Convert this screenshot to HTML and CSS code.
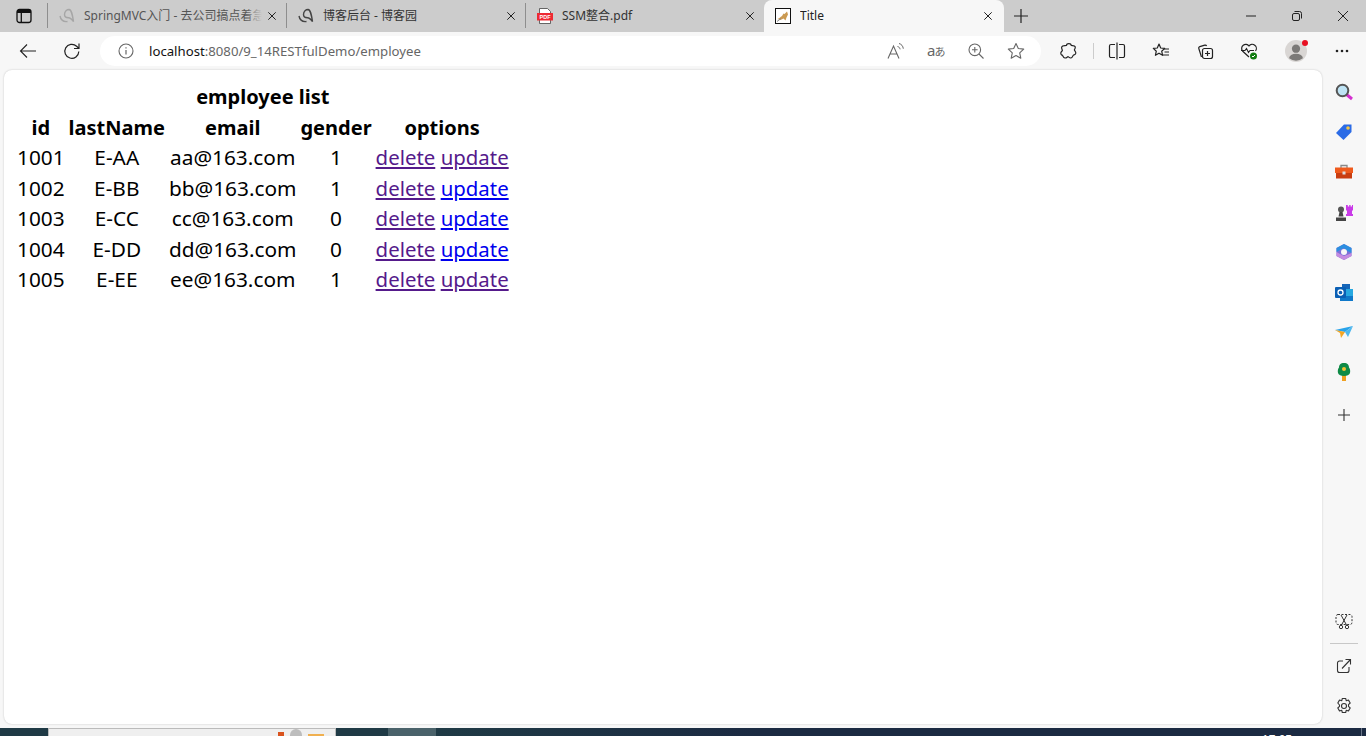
FILE: index.html
```html
<!DOCTYPE html>
<html lang="en">
<head>
<meta charset="utf-8">
<title>Title</title>
<link rel="stylesheet" href="styles.css">
</head>
<body>
<div class="browser">
  <div class="tabstrip">
    <div class="tabmenu">
      <svg class="ic" width="16" height="16" viewBox="0 0 16 16"><rect x="1" y="1.500" width="14" height="13" rx="2.500" fill="none" stroke="#111" stroke-width="1.300"/><path d="M1 3.500a2 2 0 0 1 2-2h10a2 2 0 0 1 2 2v1.500H1z" fill="#111"/><path d="M5.300 5v9" stroke="#111" stroke-width="1.300"/></svg>
    </div>
    <div class="tab dim first">
      <svg class="fav" width="16" height="16" viewBox="0 0 16 16"><path d="M1 8c.8 4 3.500 6 7.500 5.500M5.500 6.500C5.500 3 8 1.500 10 1.500c2.500.3 3.300 4.500 4.500 12-1.800-2.500-3-3.800-5-3.800-2.300 0-4-1.200-4-3.200z" fill="none" stroke="#a6a6a6" stroke-width="1.400"/></svg>
      <span class="tabtitle">SpringMVC入门 - 去公司搞点着急</span>
      <span class="fade"></span>
      <svg class="close" width="8" height="8" viewBox="0 0 8 8"><path d="M.3.300l7.400 7.400M7.700.300L.3 7.700" stroke="#222" stroke-width="1"/></svg>
    </div>
    <div class="tab">
      <svg class="fav" width="16" height="16" viewBox="0 0 16 16"><path d="M1 8c.8 4 3.500 6 7.500 5.500M5.500 6.500C5.500 3 8 1.500 10 1.500c2.500.3 3.300 4.500 4.500 12-1.800-2.500-3-3.800-5-3.800-2.300 0-4-1.200-4-3.200z" fill="none" stroke="#444" stroke-width="1.400"/></svg>
      <span class="tabtitle">博客后台 - 博客园</span>
      <svg class="close" width="8" height="8" viewBox="0 0 8 8"><path d="M.3.300l7.400 7.400M7.700.300L.3 7.700" stroke="#222" stroke-width="1"/></svg>
    </div>
    <div class="tab">
      <svg class="fav" width="16" height="16" viewBox="0 0 16 16"><path d="M2.500.5h8l3 3v12h-11z" fill="#fff" stroke="#444" stroke-width=".8"/><rect x="0" y="5" width="16" height="7.500" fill="#ee2a33"/><text class="pdf" x="8" y="11">PDF</text></svg>
      <span class="tabtitle">SSM整合.pdf</span>
      <svg class="close" width="8" height="8" viewBox="0 0 8 8"><path d="M.3.300l7.400 7.400M7.700.300L.3 7.700" stroke="#222" stroke-width="1"/></svg>
    </div>
    <div class="tab active">
      <svg class="fav" width="16" height="16" viewBox="0 0 16 16"><rect x=".5" y=".5" width="15" height="15" fill="#fff" stroke="#111"/><path d="M2.500 11c1.500-.5 3-2 4.500-3l1.500-2.500 1 .5L12 3.500l1 3-1.500 3-1 3-2-2-3 1.500z" fill="#cb9a52"/><path d="M2 13.500l4-3" stroke="#888"/></svg>
      <span class="tabtitle">Title</span>
      <svg class="close" width="8" height="8" viewBox="0 0 8 8"><path d="M.3.300l7.400 7.400M7.700.300L.3 7.700" stroke="#222" stroke-width="1"/></svg>
    </div>
    <div class="newtab">
      <svg width="14" height="14" viewBox="0 0 14 14"><path d="M7 0v14M0 7h14" stroke="#222" stroke-width="1.200"/></svg>
    </div>
    <div class="winctl">
      <span class="wc"><svg width="12" height="12" viewBox="0 0 12 12"><path d="M1 6h10" stroke="#222"/></svg></span>
      <span class="wc"><svg width="12" height="12" viewBox="0 0 12 12"><rect x="1.500" y="3.500" width="7" height="7" rx="1.500" fill="none" stroke="#222"/><path d="M3.500 1.500h5a2 2 0 0 1 2 2v5" fill="none" stroke="#222"/></svg></span>
      <span class="wc"><svg width="12" height="12" viewBox="0 0 12 12"><path d="M1 1l10 10M11 1L1 11" stroke="#222"/></svg></span>
    </div>
  </div>

  <div class="toolbar">
    <div class="navbtn">
      <svg width="18" height="16" viewBox="0 0 18 16"><path d="M17 8H1.500M8 1.500L1.500 8 8 14.500" fill="none" stroke="#222" stroke-width="1.100"/></svg>
    </div>
    <div class="navbtn">
      <svg width="18" height="18" viewBox="0 0 18 18"><path d="M15.800 9.500a7 7 0 1 1-2.200-5.300L16 6.500M16 1.500v5h-5" fill="none" stroke="#222" stroke-width="1.200"/></svg>
    </div>
    <div class="omnibox">
      <svg class="info" width="16" height="16" viewBox="0 0 16 16"><circle cx="8" cy="8" r="7" fill="none" stroke="#666" stroke-width="1.100"/><path d="M8 7v4.500M8 4.300v1.200" stroke="#666" stroke-width="1.200"/></svg>
      <span class="url"><span class="host">localhost</span>:8080/9_14RESTfulDemo/employee</span>
      <span class="omni-icons">
        <span class="oi"><svg width="18" height="18" viewBox="0 0 18 18"><path d="M1 16.500L6.500 4 12 16.500M3 12h7" fill="none" stroke="#666" stroke-width="1.100"/><path d="M10.500 4.500c1.500.4 2.300 1.200 2.600 2.800M12 1.500c2.500.7 4 2.500 4.300 5.200" fill="none" stroke="#666"/></svg></span>
        <span class="oi"><svg width="22" height="18" viewBox="0 0 22 18"><text class="trans a" x="2" y="14">a</text><text class="trans b" x="9.500" y="14">あ</text></svg></span>
        <span class="oi"><svg width="16" height="16" viewBox="0 0 16 16"><circle cx="6.800" cy="6.800" r="5.800" fill="none" stroke="#666" stroke-width="1.100"/><path d="M11 11l4.500 4.500M6.800 4v5.600M4 6.800h5.600" stroke="#666" stroke-width="1.100"/></svg></span>
        <span class="oi"><svg width="18" height="18" viewBox="0 0 18 18"><path d="M9 1.500l2.300 5 5.400.6-4 3.700 1.100 5.400L9 13.500l-4.800 2.700 1.100-5.400-4-3.700 5.400-.6z" fill="none" stroke="#666" stroke-width="1.100" stroke-linejoin="round"/></svg></span>
      </span>
    </div>
    <div class="tools">
      <span class="tool"><svg width="18" height="18" viewBox="0 0 18 18"><path d="M6.500 3.500C6.700 1 11 1 11.200 3.500c1.500.3 3.500-.2 4 1.300.4 1.400-.6 2.400-.8 3-.1.8 1.600 1.500 1.400 3.400-.2 1.600-1.700 1.800-2.500 2-.7.3-.4 2.400-2.300 2.800-1.600.2-2.400-1.300-3-1.300-.7 0-1.400 1.500-3.100 1.300-1.800-.3-1.800-2.300-2.500-2.800C2.400 13.300.9 13 .8 11.300.7 9.700 2.400 9.100 2.400 8.300 2.400 7.600 1.200 6.400 1.700 5 2.300 3.300 5 3.900 6.500 3.500z" fill="none" stroke="#222" stroke-width="1.200" stroke-linejoin="round"/></svg></span>
      <span class="tooldiv"></span>
      <span class="tool"><svg width="18" height="18" viewBox="0 0 18 18"><path d="M7 2.500H3a1.500 1.500 0 0 0-1.500 1.500v10A1.500 1.500 0 0 0 3 15.500h4M11 2.500h4A1.500 1.500 0 0 1 16.500 4v10a1.500 1.500 0 0 1-1.500 1.500h-4M9 .5v17" fill="none" stroke="#222" stroke-width="1.200"/></svg></span>
      <span class="tool"><svg width="18" height="18" viewBox="0 0 18 18"><path d="M7 2l1.700 4 4 .4-3 2.800.9 4.100L7 11.200l-3.600 2.100.9-4.100-3-2.800 4-.4z" fill="none" stroke="#222" stroke-width="1.200" stroke-linejoin="round"/><path d="M12 7h5M12.500 10h4.500M11 13h6" stroke="#222" stroke-width="1.200"/></svg></span>
      <span class="tool"><svg width="18" height="18" viewBox="0 0 18 18"><path d="M5.500 15L2.800 6.500a1.500 1.500 0 0 1 1-1.900l5-1.500a1.500 1.500 0 0 1 1.800.9" fill="none" stroke="#222" stroke-width="1.200"/><rect x="6.500" y="6.500" width="10" height="10" rx="2" fill="none" stroke="#222" stroke-width="1.200"/><path d="M11.500 9v5M9 11.500h5" stroke="#222" stroke-width="1.200"/></svg></span>
      <span class="tool"><svg width="18" height="18" viewBox="0 0 18 18"><path d="M9 15L2.500 9A4 4 0 0 1 9 4a4 4 0 0 1 6.500 5" fill="none" stroke="#222" stroke-width="1.200"/><path d="M1 8.500h4l1.500-2 2 4 1.500-2h4" fill="none" stroke="#222" stroke-width="1.100"/><circle cx="13.500" cy="14" r="3.500" fill="#107c10"/><path d="M12 14l1 1 2-2" fill="none" stroke="#fff"/></svg></span>
      <span class="avatar">
        <svg width="22" height="22" viewBox="0 0 24 24"><circle cx="12" cy="12" r="12" fill="#d9d6d4"/><circle cx="12" cy="9.500" r="4.500" fill="#7b7977"/><path d="M4.500 20a7.500 5 0 0 1 15 0 12 12 0 0 1-15 0z" fill="#7b7977"/></svg>
        <span class="badge"></span>
      </span>
      <span class="tool more"><svg width="16" height="4" viewBox="0 0 16 4"><circle cx="3" cy="2" r="1.300" fill="#222"/><circle cx="8" cy="2" r="1.300" fill="#222"/><circle cx="13" cy="2" r="1.300" fill="#222"/></svg></span>
    </div>
  </div>

  <div class="workarea">
    <main class="page">
      <table class="emp">
        <tr><th colspan="5">employee list</th></tr>
        <tr><th>id</th><th>lastName</th><th>email</th><th>gender</th><th>options</th></tr>
        <tr><td>1001</td><td>E-AA</td><td>aa@163.com</td><td>1</td><td><a class="seen" href="#">delete</a> <a class="seen" href="#">update</a></td></tr>
        <tr><td>1002</td><td>E-BB</td><td>bb@163.com</td><td>1</td><td><a class="seen" href="#">delete</a> <a href="#">update</a></td></tr>
        <tr><td>1003</td><td>E-CC</td><td>cc@163.com</td><td>0</td><td><a class="seen" href="#">delete</a> <a href="#">update</a></td></tr>
        <tr><td>1004</td><td>E-DD</td><td>dd@163.com</td><td>0</td><td><a class="seen" href="#">delete</a> <a href="#">update</a></td></tr>
        <tr><td>1005</td><td>E-EE</td><td>ee@163.com</td><td>1</td><td><a class="seen" href="#">delete</a> <a class="seen" href="#">update</a></td></tr>
      </table>
    </main>
    <aside class="sidebar">
      <div class="side-top">
        <span class="sb"><svg width="18" height="18" viewBox="0 0 18 18"><path d="M11 11l6 5" stroke="#d42fd0" stroke-width="3"/><circle cx="7.500" cy="7.500" r="5.800" fill="#bfe4f5" stroke="#555" stroke-width="2"/></svg></span>
        <span class="sb"><svg width="18" height="18" viewBox="0 0 18 18"><path d="M1 10l8-8.500h7.500V9l-8 8z" fill="#2b6be6"/><circle cx="13" cy="5" r="1.800" fill="#f4c542"/></svg></span>
        <span class="sb"><svg width="18" height="18" viewBox="0 0 18 18"><path d="M6 5V2.500h6V5" fill="none" stroke="#888" stroke-width="1.300"/><rect y="4.500" x="0" width="18" height="5.500" fill="#ef5a1c"/><rect y="10" x="1" width="16" height="5.500" fill="#c93d10"/><rect x="7.500" y="8.500" width="3" height="3" fill="#ddd"/></svg></span>
        <span class="sb"><svg width="18" height="18" viewBox="0 0 18 18"><path d="M11 2h1.800v1.500h1.400V2h1.400v1.500H17V2h1v5l-1 1v3h1v2h-7v-2h1V8l-1-1z" fill="#c93be8"/><circle cx="6" cy="6.500" r="3" fill="#555"/><path d="M4.500 9h3l1 4.500h-5zM1 14.500h10V18H1z" fill="#444"/></svg></span>
        <span class="sb"><svg width="18" height="18" viewBox="0 0 18 18"><path d="M9 1l7.500 4v8L9 17l-7.500-4V5z" fill="#7c6fd8"/><path d="M9 1l7.500 4v5l-5-2.500L9 5 5 7 1.500 9V5z" fill="#2c8fe0"/><path d="M1.500 9L5 11l4 2 4-1.500 3.500-1.500V13L9 17l-7.500-4z" fill="#c58be0"/><circle cx="9" cy="9" r="3" fill="#f7f7f7"/></svg></span>
        <span class="sb"><svg width="18" height="18" viewBox="0 0 18 18"><path d="M7 1h8v8H7z" fill="#1666b8"/><path d="M10 6h8v7h-8z" fill="#27a8e0"/><path d="M5 13h13v5H5z" fill="#0f78c9"/><rect y="4" x="0" width="11" height="11" rx="1" fill="#0a5fb4"/><circle cx="5.500" cy="9.500" r="2.500" fill="none" stroke="#fff" stroke-width="1.300"/></svg></span>
        <span class="sb"><svg width="18" height="18" viewBox="0 0 18 18"><path d="M0 7l18-4-8 6z" fill="#29a3ea"/><path d="M18 3l-8 6 3 5z" fill="#4fb8ee"/><path d="M0 7l5 3 1 5 4-6z" fill="#f5a623"/></svg></span>
        <span class="sb"><svg width="18" height="18" viewBox="0 0 18 18"><rect x="7" y="12" width="4" height="6" fill="#f0a020"/><path d="M9 0c3.500 0 5 2 5 4.500 1 1 1.500 3 1 5.500-.5 2-3 3-6 3s-5.500-1-6-3c-.5-2.500 0-4.500 1-5.500C4 2 5.500 0 9 0z" fill="#0e8a46"/><circle cx="9" cy="6" r="2" fill="#f1c232"/></svg></span>
        <span class="sb add"><svg width="12" height="12" viewBox="0 0 12 12"><path d="M6 0v12M0 6h12" stroke="#333" stroke-width="1.100"/></svg></span>
      </div>
      <div class="side-bottom">
        <span class="sb"><svg width="18" height="18" viewBox="0 0 18 18"><rect x="1" y="2.500" width="16" height="10" rx="2" fill="none" stroke="#333" stroke-dasharray="2 1.500"/><path d="M6 3l5.500 10M12 3L6.500 13" stroke="#333"/><circle cx="6" cy="15" r="1.700" fill="none" stroke="#333"/><circle cx="12" cy="15" r="1.700" fill="none" stroke="#333"/></svg></span>
        <span class="side-rule"></span>
        <span class="sb"><svg width="16" height="16" viewBox="0 0 16 16"><path d="M7 3H3.500A2 2 0 0 0 1.500 5v7.500a2 2 0 0 0 2 2H11a2 2 0 0 0 2-2V9M6 10.500L14.500 1.500M9.500 1.500h5v5" fill="none" stroke="#333" stroke-width="1.100"/></svg></span>
        <span class="sb"><svg width="18" height="18" viewBox="0 0 18 18"><circle cx="9" cy="9" r="2.500" fill="none" stroke="#333" stroke-width="1.100"/><path d="M7.300 1.500h3.400l.6 2.300 2.200-.7 1.700 2.900-1.700 1.600v1.800l1.700 1.600-1.700 2.900-2.200-.7-.6 2.300H7.300l-.6-2.300-2.200.7-1.700-2.900 1.700-1.600V8L2.800 6l1.700-2.900 2.200.7z" fill="none" stroke="#333" stroke-width="1.100" stroke-linejoin="round"/></svg></span>
      </div>
    </aside>
  </div>

  <div class="taskbar">
    <div class="task-left"></div>
    <div class="task-window">
      <span class="bit orange"></span>
      <span class="bit grey"></span>
      <span class="bit amber"></span>
    </div>
    <div class="task-gap"></div>
    <div class="task-active"></div>
    <div class="task-fill"></div>
    <div class="task-clock">17:05</div>
    <div class="task-end"></div>
  </div>
</div>
</body>
</html>
```
FILE: styles.css
```css
* { box-sizing: border-box; }
html, body { margin: 0; padding: 0; height: 736px; overflow: hidden; }
body { font-family: "Noto Sans", "Noto Sans CJK SC", sans-serif; background: #f7f7f7; }
svg { display: block; flex: none; }
.browser { display: flex; flex-direction: column; height: 736px; width: 1366px; overflow: hidden; }

.tabstrip { display: flex; align-items: stretch; height: 32px; background: #cccccc; flex: none; }
.tabmenu { width: 47px; display: flex; align-items: center; padding-left: 16px; }
.tab { position: relative; width: 239px; display: flex; align-items: center; padding: 0 10px 0 11px; font-size: 12px; color: #333; border-left: 1px solid #8e8e8e; background-clip: padding-box; }
.tab { border-image: linear-gradient(#ccc 4px, #8e8e8e 4px, #8e8e8e 27px, #ccc 27px) 1; }
.tab.active { background: #f7f7f7; border: 0; border-image: none; width: 240px; border-radius: 8px 8px 0 0; padding-left: 11px; padding-right: 12px; color: #222; }
.tab.dim .tabtitle { color: #555; }
.fav { margin-right: 9px; }
.tabtitle { flex: 1; white-space: nowrap; overflow: hidden; font-family: "Noto Sans", "Noto Sans CJK SC", sans-serif; line-height: 16px; padding-bottom: 1px; }
.fade { position: absolute; right: 24px; width: 16px; top: 6px; height: 20px; background: linear-gradient(90deg, rgba(204,204,204,0), #ccc); }
.close { margin-left: 6px; }
.pdf { fill: #fff; font-family: "Liberation Sans", sans-serif; font-size: 5.500px; font-weight: 700; text-anchor: middle; }
.newtab { width: 36px; display: flex; align-items: center; justify-content: center; margin-left: -1px; }
.winctl { margin-left: auto; display: flex; }
.wc { width: 46px; display: flex; align-items: center; justify-content: center; }

.toolbar { display: flex; align-items: center; height: 38px; flex: none; background: #f7f7f7; padding-bottom: 1px; }
.navbtn { width: 44px; display: flex; align-items: center; justify-content: center; }
.navbtn:first-child { margin-left: 6px; }
.omnibox { display: flex; align-items: center; width: 941px; height: 30px; margin-left: 6px; background: #fff; border-radius: 15px; padding-left: 18px; }
.info { margin-right: 15px; }
.url { font-family: "Noto Sans", sans-serif; font-size: 13.200px; color: #666; white-space: nowrap; }
.host { color: #111; }
.omni-icons { margin-left: auto; display: flex; align-items: center; padding-right: 5px; }
.oi { width: 40px; display: flex; align-items: center; justify-content: center; }
.trans { fill: #666; font-family: "Noto Sans", "Noto Sans CJK JP", sans-serif; }
.trans.a { font-size: 15px; }
.trans.b { font-size: 11px; }
.tools { display: flex; align-items: center; margin-left: 6px; }
.tool { width: 44px; display: flex; align-items: center; justify-content: center; }
.tooldiv { width: 1px; height: 16px; background: #ccc; margin: 0 1px 0 2px; }
.avatar { position: relative; width: 50px; display: flex; align-items: center; justify-content: center; }
.badge { position: absolute; top: 0; right: 13px; width: 6px; height: 6px; border-radius: 50%; background: #e81123; }
.tool.more { width: 42px; }

.workarea { display: flex; flex: 1; min-height: 0; }
.page { width: 1318px; margin: 0 0 4px 4px; background: #fff; border-radius: 8px; box-shadow: 0 0 2px rgba(0,0,0,.22); padding: 11px 8px 8px 10px; }
.emp { font-size: 20.800px; line-height: 26.500px; color: #000; font-family: "Noto Sans", "Noto Sans CJK SC", sans-serif; border-spacing: 2px; }
.emp td { text-align: center; padding: 0 1px 2px; }
.emp th { padding: 1px; font-size: 20px; }
.emp a { color: #0000ee; font-size: 20.400px; }
.emp a.seen { color: #551a8b; }

.sidebar { flex: 1; display: flex; flex-direction: column; justify-content: space-between; align-items: center; padding-bottom: 2px; }
.side-top { display: flex; flex-direction: column; align-items: center; padding-top: 2px; }
.sb { width: 40px; height: 40px; display: flex; align-items: center; justify-content: center; }
.sb.add { margin-top: 3px; }
.side-bottom { display: flex; flex-direction: column; align-items: center; }
.side-rule { width: 28px; height: 1px; background: #c8c8c8; margin: 2px 0; }

.taskbar { display: flex; height: 8px; flex: none; overflow: hidden; background: #1b2a42; margin-top: 0; }
.task-left { width: 48px; background: #1f3a45; }
.task-window { position: relative; width: 288px; background: #efefef; border: 1px solid #bbb; border-bottom: 0; overflow: hidden; }
.bit { position: absolute; }
.bit.orange { left: 229px; top: 3px; width: 6px; height: 6px; background: #d9531e; }
.bit.grey { left: 241px; top: 0; width: 12px; height: 8px; border-radius: 6px 6px 0 0; background: #bdbdbd; }
.bit.amber { left: 259px; top: 5px; width: 16px; height: 2px; background: #f0b050; }
.task-gap { width: 52px; background: #1f3a45; }
.task-active { width: 48px; background: #4a626a; }
.task-fill { flex: 1; background: linear-gradient(90deg, #1f3a45, #1b2a42 40%); }
.task-clock { width: 60px; padding-top: 5px; color: #fff; font-family: "Liberation Sans", sans-serif; font-size: 12px; text-align: center; line-height: 14px; }
.task-end { width: 59px; }
.task-end { background: linear-gradient(90deg, transparent 54px, #6b7688 54px, #6b7688 55px, transparent 55px); }
```
